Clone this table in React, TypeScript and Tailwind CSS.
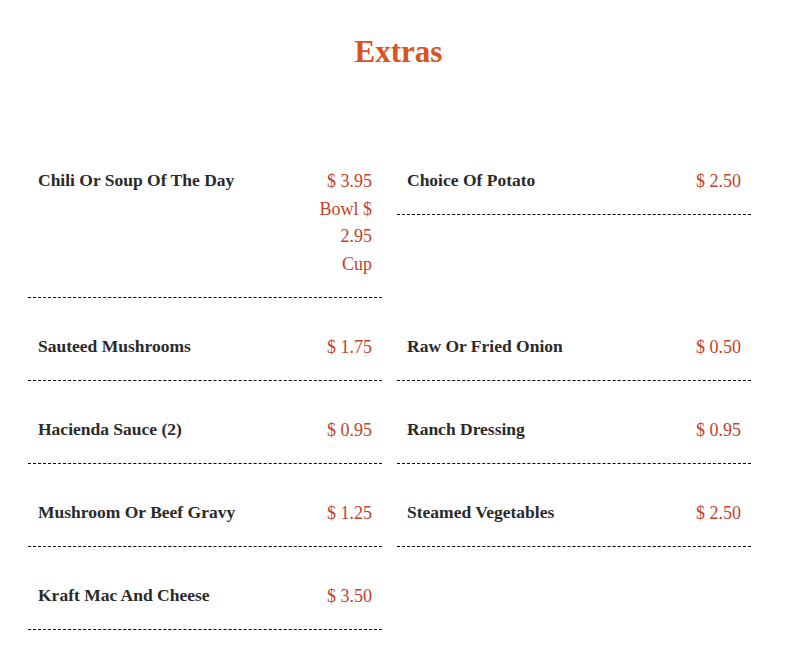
import React from "react";

type Item = { name: string; price: string };

const left: Item[] = [
  { name: "Chili Or Soup Of The Day", price: "$ 3.95 Bowl $ 2.95 Cup" },
  { name: "Sauteed Mushrooms", price: "$ 1.75" },
  { name: "Hacienda Sauce (2)", price: "$ 0.95" },
  { name: "Mushroom Or Beef Gravy", price: "$ 1.25" },
  { name: "Kraft Mac And Cheese", price: "$ 3.50" },
];
const right: Item[] = [
  { name: "Choice Of Potato", price: "$ 2.50" },
  { name: "Raw Or Fried Onion", price: "$ 0.50" },
  { name: "Ranch Dressing", price: "$ 0.95" },
  { name: "Steamed Vegetables", price: "$ 2.50" },
];

function Row({ item }: { item: Item }) {
  return (
    <div className="flex items-start justify-between border-b border-dashed border-black px-[10px] pt-[20px] pb-[20px]">
      <div className="text-[17.5px] font-bold leading-[28px] text-[#2a2a2a]">{item.name}</div>
      <div className="w-[58px] -mb-[2px] pt-[2px] text-right text-[18px] leading-[27.7px] text-[#c2422a]">{item.price}</div>
    </div>
  );
}

export default function App() {
  const rows = [0, 1, 2, 3, 4];
  return (
    <div
      className="min-h-[656px] bg-white"
      style={{ fontFamily: '"Liberation Serif", "DejaVu Serif", serif' }}
    >
      <h1 className="pt-[30px] text-center text-[31px] font-bold leading-[44px] text-[#d9531e]">Extras</h1>
      <div className="mx-[28px] mt-[72px] grid grid-cols-2 items-start gap-x-[15px] gap-y-[14px] w-[723px]">
        {rows.map((i) => (
          <React.Fragment key={i}>
            {left[i] ? <Row item={left[i]} /> : <div />}
            {right[i] ? <Row item={right[i]} /> : <div />}
          </React.Fragment>
        ))}
      </div>
    </div>
  );
}
